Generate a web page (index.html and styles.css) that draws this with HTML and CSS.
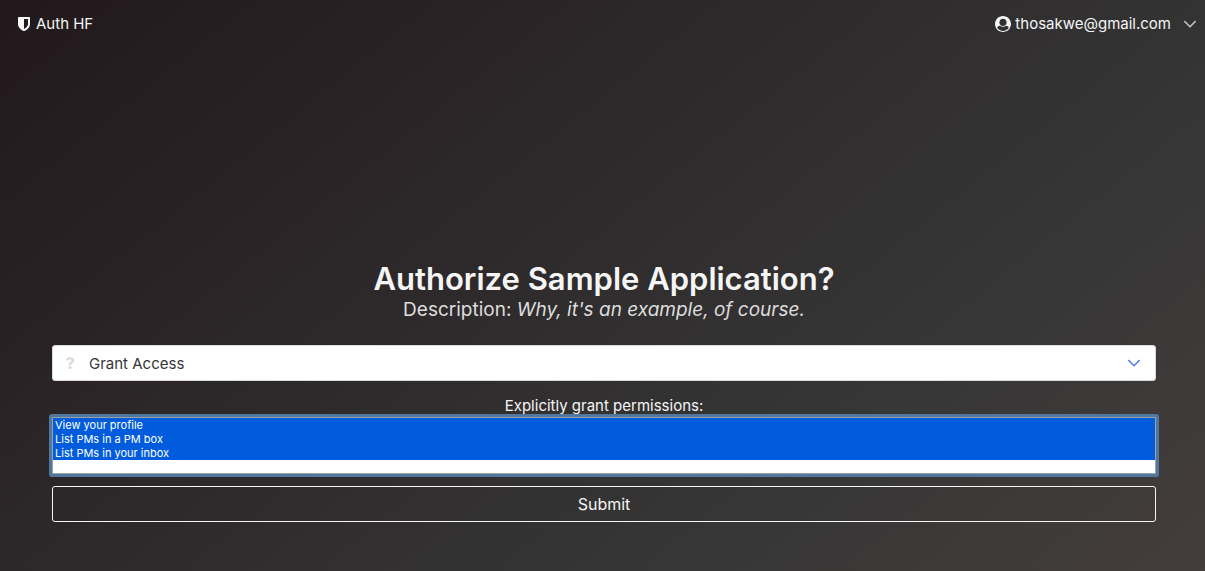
FILE: index.html
```html
<!DOCTYPE html>
<html lang="en">
<head>
<meta charset="utf-8">
<title>Auth HF</title>
<link rel="stylesheet" href="styles.css">
</head>
<body>
<section class="hero">
  <nav class="navbar">
    <a class="brand" href="#">
      <svg class="icon-shield" viewBox="0 0 12 14" aria-hidden="true"><path fill="currentColor" fill-rule="evenodd" d="M.7 0h10.600q.7 0 .7.700V7c0 3.300-2.600 5.600-5.500 7q-.5.200-1 0C2.600 12.600 0 10.300 0 7V.7Q0 0 .7 0zM6 2v10c2.300-1.300 4-2.900 4-5V2z"/></svg>
      <span>Auth HF</span>
    </a>
    <button class="account" type="button">
      <svg class="icon-user" viewBox="8 8 496 496" aria-hidden="true"><path fill="currentColor" fill-rule="evenodd" d="M8 256C8 119 119 8 256 8s248 111 248 248-111 248-248 248S8 393 8 256zm72 126C120 436 184 472 256 472s136-36 176-90c-3-27-18-52-49-61l-36-9C323 329 292 344 256 344s-67-15-91-32l-36 9c-31 9-46 34-49 61zM144 208c0 62 50 112 112 112s112-50 112-112S318 96 256 96s-112 50-112 112z"/></svg>
      <span>thosakwe@gmail.com</span>
      <svg class="chevron" viewBox="0 0 12 8" aria-hidden="true"><path d="M1 1l5 5 5-5" fill="none" stroke="currentColor" stroke-width="1.300"/></svg>
    </button>
  </nav>
  <main class="content">
    <h1 class="title">Authorize Sample Application?</h1>
    <p class="subtitle">Description: <em>Why, it's an example, of course.</em></p>
    <form class="form">
      <div class="control">
        <svg class="icon-question" viewBox="0 0 384 512" aria-hidden="true"><path fill="currentColor" d="M202.021 0C122.202 0 70.503 32.703 29.914 91.026c-7.363 10.580-5.093 25.086 5.178 32.874l43.138 32.709c10.373 7.865 25.132 6.026 33.253-4.148 25.049-31.381 43.630-49.449 82.757-49.449 30.764 0 68.816 19.799 68.816 49.631 0 22.552-18.617 34.134-48.993 51.164-35.423 19.860-82.299 44.576-82.299 106.405V320c0 13.255 10.745 24 24 24h72.471c13.255 0 24-10.745 24-24v-5.773c0-42.860 125.268-44.645 125.268-160.627C377.504 66.256 286.902 0 202.021 0zM192 373.459c-38.196 0-69.271 31.075-69.271 69.271 0 38.195 31.075 69.270 69.271 69.270s69.271-31.075 69.271-69.271-31.075-69.270-69.271-69.270z"/></svg>
        <select class="select" aria-label="Access"><option>Grant Access</option><option>Deny Access</option></select>
        <svg class="chevron select-arrow" viewBox="0 0 12 8" aria-hidden="true"><path d="M1 1l5 5 5-5" fill="none" stroke="currentColor" stroke-width="1.300"/></svg>
      </div>
      <label class="label" for="scopes">Explicitly grant permissions:</label>
      <select class="scopes" id="scopes" multiple size="4">
        <option selected>View your profile</option>
        <option selected>List PMs in a PM box</option>
        <option selected>List PMs in your inbox</option>
      </select>
      <button class="submit" type="button">Submit</button>
    </form>
  </main>
</section>
</body>
</html>
```
FILE: styles.css
```css
* { box-sizing: border-box; }
body { margin: 0; font-family: Inter, "Liberation Sans", sans-serif; font-size: 15px; line-height: 24px; color: #f5f5f5; }
button, select { font: inherit; }
.hero { min-height: 100vh; display: flex; flex-direction: column; background: linear-gradient(141deg, #22181b 0%, #363636 71%, #433d3b 100%); }
.navbar { display: flex; justify-content: space-between; align-items: center; padding: 12px 8px 0 18px; }
.brand { display: flex; align-items: center; gap: 6px; color: inherit; text-decoration: none; }
.icon-shield { width: 12px; height: 14px; }
.icon-user { width: 16px; height: 16px; margin-right: 4px; }
.account { display: flex; align-items: center; padding: 0; border: 0; background: none; color: inherit; }
.chevron { width: 14px; height: 9px; }
.account .chevron { margin-left: 12px; color: #c4c4c4; }
.content { flex: 1; display: flex; flex-direction: column; justify-content: flex-end; padding: 0 49px 49px 52px; text-align: center; }
.title { margin: 0; font-size: 31px; line-height: 32px; font-weight: 600; }
.subtitle { margin: 0 0 20px; font-size: 19px; line-height: 30px; color: #dddddd; }
.form { display: flex; flex-direction: column; }
.control { display: grid; align-items: center; margin-bottom: 12px; }
.control > * { grid-area: 1 / 1; }
.select { appearance: none; width: 100%; height: 36px; padding: 1px 36px 0; border: 1px solid #dbdbdb; border-radius: 3px; background: #fff; color: #363636; }
.icon-question { z-index: 1; width: 10px; height: 12px; margin-left: 13px; color: #dbdbdb; pointer-events: none; }
.select-arrow { z-index: 1; justify-self: end; margin-right: 15px; color: #4f7fe6; pointer-events: none; }
.label { height: 24px; line-height: 26px; }
.scopes { appearance: none; width: 100%; height: 57px; padding: 0; border: 1px solid #a0a0a0; border-radius: 1px; background: #fff; box-shadow: 0 0 0 3px #50779e; outline: 0; overflow: hidden; font-size: 11px; }
.scopes option { min-height: 14px; padding: 0 2px; line-height: 14px; color: #fff; background: #005cdc linear-gradient(#005cdc, #005cdc); }
.submit { height: 36px; margin-top: 12px; border: 1px solid #f5f5f5; border-radius: 3px; background: transparent; color: #f5f5f5; font-size: 16px; }
```
